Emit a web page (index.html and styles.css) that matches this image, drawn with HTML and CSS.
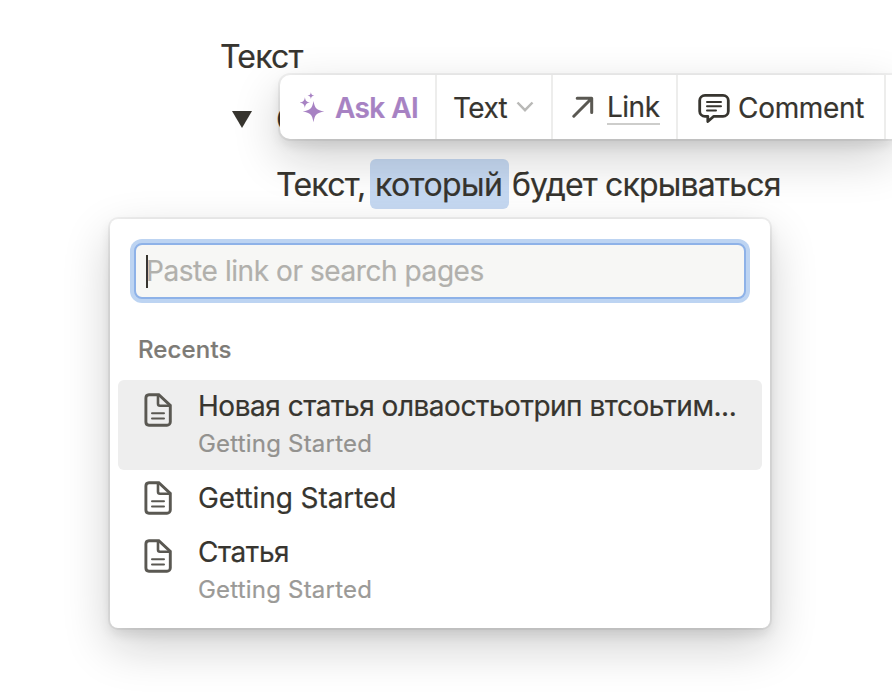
FILE: index.html
```html
<!DOCTYPE html>
<html lang="ru">
<head>
<meta charset="utf-8">
<title>Текст</title>
<link rel="stylesheet" href="styles.css">
</head>
<body>
<svg class="defs" aria-hidden="true">
  <symbol id="page" viewBox="0 0 28 34">
    <path d="M5 1.700h9.800L26.300 12.500V29a3.300 3.300 0 0 1-3.300 3.300H5A3.300 3.300 0 0 1 1.900 29V5A3.300 3.300 0 0 1 5 1.700Z" fill="none" stroke="currentColor" stroke-width="2.900"/>
    <path d="M14 2v8.700a2 2 0 0 0 2 2h10" fill="none" stroke="currentColor" stroke-width="2.600"/>
    <path d="M8 20.200h12M8 25.400h12" fill="none" stroke="currentColor" stroke-width="2" stroke-linecap="round"/>
  </symbol>
</svg>
<main class="editor">
  <p class="line first"><span class="t-first">Текст</span></p>
  <div class="toggle">
    <svg class="triangle" width="20" height="17" viewBox="0 0 20 17"><path d="M0 0h20L10 17Z" fill="currentColor"/></svg>
    <span class="toggle-title">С</span>
  </div>
  <p class="line nested"><span class="t-before">Текст,</span><mark class="selection">который</mark><span class="t-after">будет скрываться</span></p>
</main>

<div class="toolbar">
  <div class="cell ask">
    <svg width="26" height="32" viewBox="0 0 26 32" fill="currentColor">
      <path d="M13.500 9C14.800 16.500 16.500 18.200 24.300 19.500C16.500 20.800 14.800 22.500 13.500 30.300C12.200 22.500 10.500 20.800 2.700 19.500C10.500 18.200 12.200 16.500 13.500 9Z"/>
      <path d="M4.900 5.300C5.500 9 6.500 10 10 10.600C6.500 11.200 5.500 12.200 4.900 15.900C4.300 12.200 3.300 11.200-.2 10.600C3.300 10 4.300 9 4.900 5.300Z"/>
      <path d="M10.900.2C11.300 2.500 12 3.200 14.300 3.600C12 4 11.300 4.700 10.900 7C10.500 4.700 9.800 4 7.500 3.600C9.800 3.200 10.500 2.500 10.900.2Z"/>
    </svg>
    <span class="t-ask">Ask AI</span>
  </div>
  <div class="cell style">
    <span class="t-text">Text</span>
    <svg class="chevron" width="18" height="12" viewBox="0 0 18 12"><path d="m1.500 1.500 7.500 7.700 7.500-7.700" fill="none" stroke="currentColor" stroke-width="2.500"/></svg>
  </div>
  <div class="cell link">
    <svg width="22" height="22" viewBox="0 0 22 22"><path d="M1.800 20.200 19.500 2.500M5.200 2.200h14.500v14.300" fill="none" stroke="currentColor" stroke-width="3" stroke-linecap="round" stroke-linejoin="round"/></svg>
    <span class="t-link">Link</span>
  </div>
  <div class="cell comment">
    <svg width="32" height="29" viewBox="0 0 32 30" preserveAspectRatio="none" fill="none" stroke="currentColor" stroke-linecap="round" stroke-linejoin="round">
      <path d="M7 1.500h18a5.300 5.300 0 0 1 5.300 5.300v11a5.300 5.300 0 0 1-5.300 5.300h-9.200L9.800 28.500v-5.400H7a5.300 5.300 0 0 1-5.300-5.300v-11A5.300 5.300 0 0 1 7 1.500Z" stroke-width="2.800"/>
      <path d="M9 8.300h14M9 12.600h14M9 17h9" stroke-width="2"/>
    </svg>
    <span class="t-comment">Comment</span>
  </div>
</div>

<section class="popup">
  <div class="field"><i class="caret"></i><span class="t-placeholder">Paste link or search pages</span></div>
  <h2 class="heading"><span class="t-recents">Recents</span></h2>
  <div class="item active">
    <svg width="28" height="34"><use href="#page"/></svg>
    <div class="labels"><span class="title t-new">Новая статья олваостьотрип втсоьтим...</span><span class="sub">Getting Started</span></div>
  </div>
  <div class="item single">
    <svg width="28" height="34"><use href="#page"/></svg>
    <div class="labels"><span class="title t-getting">Getting Started</span></div>
  </div>
  <div class="item last">
    <svg width="28" height="34"><use href="#page"/></svg>
    <div class="labels"><span class="title t-article">Статья</span><span class="sub">Getting Started</span></div>
  </div>
</section>
</body>
</html>
```
FILE: styles.css
```css
* { box-sizing: border-box; }
html { overflow: hidden; }
body {
  margin: 0;
  width: 892px;
  height: 692px;
  overflow: hidden;
  position: relative;
  background: #fff;
  color: #37352f;
  font-family: Inter, "Liberation Sans", sans-serif;
  -webkit-text-stroke: .2px currentColor;
}
svg { display: block; flex: none; }
span { white-space: nowrap; }
.defs { position: absolute; width: 0; height: 0; }

.editor { padding: 32px 0 0 220px; }
.line { margin: 0; display: flex; align-items: flex-start; height: 50px; font-size: 32px; line-height: 49px; letter-spacing: -.75px; }
.first { letter-spacing: -.8px; }
.toggle { display: flex; align-items: center; height: 50px; margin-top: 12px; padding: 0 0 0 12px; font-size: 32px; }
.toggle-title { margin-left: 24px; }
.nested { margin-top: 15px; padding-left: 56px; }
.t-before { width: 94px; margin-top: 1px; }
.selection {
  width: 139px;
  height: 50px;
  padding-left: 5px;
  border-radius: 6px;
  background: #c6d9f2;
  color: inherit;
  line-height: 51px;
  letter-spacing: -.6px;
  white-space: nowrap;
}
.t-after { margin: 1px 0 0 3px; letter-spacing: -.85px; }

.toolbar, .popup {
  position: absolute;
  background: #fff;
  box-shadow: 0 0 0 2px rgba(15,15,15,.05), 0 6px 12px rgba(15,15,15,.1), 0 18px 48px rgba(15,15,15,.2);
}
.toolbar {
  left: 280px;
  top: 75px;
  width: 612px;
  height: 64px;
  border-radius: 10px 0 0 10px;
  display: flex;
  font-size: 28px;
  line-height: 36px;
}
.cell { display: flex; align-items: center; flex: none; border-right: 2px solid #ededec; }
.ask { width: 157px; padding: 2px 0 0 20px; color: #a782c3; font-weight: 600; letter-spacing: -.6px; }
.ask span { margin-left: 9px; }
.style { width: 116px; padding: 2px 0 0 16px; }
.t-text { width: 54px; letter-spacing: -.6px; }
.chevron { margin: -2px 0 0 9px; color: #b9b9b7; }
.link { width: 125px; padding-left: 19px; }
.link svg { color: #5a5852; }
.t-link { margin-left: 13px; height: 34px; line-height: 32px; border-bottom: 2px solid #cdcdcb; letter-spacing: -.5px; margin-top: 2px; }
.comment { width: 208px; padding: 2px 0 0 20px; }
.comment svg { margin-top: 1px; }
.t-comment { margin-left: 8px; letter-spacing: -.3px; }

.popup { left: 110px; top: 219px; width: 660px; height: 409px; padding: 24px 8px; border-radius: 8px; }
.field {
  display: flex;
  align-items: center;
  height: 56px;
  margin: 0 16px;
  padding-left: 10px;
  border: 2px solid #8eb2e8;
  border-radius: 8px;
  box-shadow: 0 0 0 4px #bdd4f2;
  background: #f7f7f5;
  color: #b1b0ac;
  font-size: 28px;
  letter-spacing: -.43px;
}
.caret { width: 2px; height: 33px; margin-right: -2px; background: #37352f; }
.heading { margin: 35px 0 0 20px; height: 32px; color: #7d7b76; font-size: 24px; line-height: 31px; font-weight: 500; letter-spacing: .15px; }
.item { display: flex; padding-left: 26px; border-radius: 6px; }
.item svg { color: #5a5852; }
.labels { margin-left: 26px; display: flex; flex-direction: column; }
.title { font-size: 28px; line-height: 36px; margin-top: -1px; }
.t-new { letter-spacing: -.48px; }
.t-getting { letter-spacing: -.08px; }
.t-article { letter-spacing: -.45px; }
.sub { color: #9b9a97; font-size: 24px; line-height: 31px; margin-top: 4px; letter-spacing: .2px; }
.active { height: 90px; margin-top: 14px; padding-top: 9px; background: #eee; }
.active svg { margin-top: 4px; }
.active .sub { color: #93928f; }
.single { height: 56px; padding-top: 11px; }
.last { padding-top: 9px; }
.last svg { margin-top: 4px; }
```
